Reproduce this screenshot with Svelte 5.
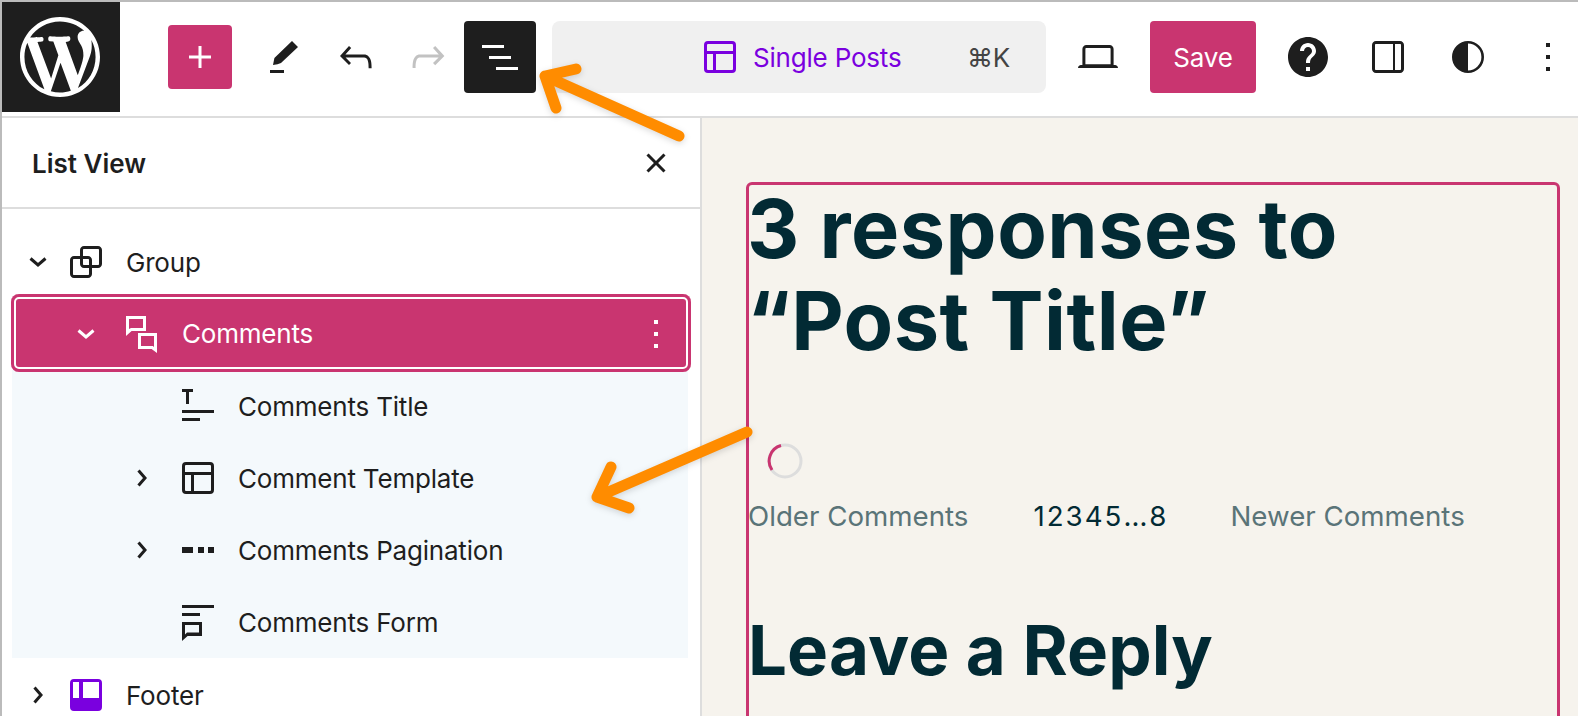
<script>
  const paths = {
    group: 'M18 4h-7c-1.1 0-2 .9-2 2v3H6c-1.1 0-2 .9-2 2v7c0 1.1.9 2 2 2h7c1.1 0 2-.9 2-2v-3h3c1.1 0 2-.9 2-2V6c0-1.1-.9-2-2-2zm-4.5 14c0 .3-.2.5-.5.5H6c-.3 0-.5-.2-.5-.5v-7c0-.3.2-.5.5-.5h3V13c0 1.1.9 2 2 2h2.5v3zm0-4.5H11c-.3 0-.5-.2-.5-.5v-2.5H13c.3 0 .5.2.5.5v2.5zm5-.5c0 .3-.2.5-.5.5h-3V11c0-1.1-.9-2-2-2h-2.5V6c0-.3.2-.5.5-.5h7c.3 0 .5.2.5.5v7z',
    comments: 'M4 3h10v7.5H6.8L4 13zM5.5 4.5v5l1-.5h6V4.5zM10 11.5h9.5v10L16.8 19.5H10zM11.5 13v5h5.9l.6.5V13z',
    title: 'M4 3.5h5.5V5H7.5v6H6V5H4zM4 14h16v1.5H4zM4 18h9v1.5H4z',
    layout: 'M18 5.5H6a.5.5 0 00-.5.5v3h13V6a.5.5 0 00-.5-.5zm.5 5H10v8h8a.5.5 0 00.5-.5v-7.5zm-10 0h-3V18a.5.5 0 00.5.5h2.5v-8zM6 4h12a2 2 0 012 2v12a2 2 0 01-2 2H6a2 2 0 01-2-2V6a2 2 0 012-2z',
    pagination: 'M4 10.5h5.5v3H4zM12 10.5h3v3h-3zM17 10.5h3v3h-3z',
    form: 'M4 3.5h16V5H4zM4 7.5h9V9H4zM4 12h10v7H6.8L4 21.5zM5.5 13.5v4.7l1-1h6v-3.7z',
    footer: 'M6 4h12a2 2 0 012 2v12a2 2 0 01-2 2H6a2 2 0 01-2-2V6a2 2 0 012-2zM5.5 5.5v8h3v-8zM10.5 5.5v8h8v-8z',
    dots: 'M13 19h-2v-2h2v2zm0-6h-2v-2h2v2zm0-6h-2V5h2v2z'
  };

  const rows = [
    { label: 'Comments Title', icon: 'title' },
    { label: 'Comment Template', icon: 'layout', arrow: true },
    { label: 'Comments Pagination', icon: 'pagination', arrow: true },
    { label: 'Comments Form', icon: 'form' }
  ];

  const pages = ['1', '2', '3', '4', '5', '…', '8'];
</script>

<div class="frame">
  <header class="topbar">
    <div class="logo">
      <svg viewBox="0 0 20 20" width="80" height="80"><path class="white" d="M20 10c0-5.51-4.49-10-10-10C4.48 0 0 4.49 0 10c0 5.52 4.48 10 10 10 5.51 0 10-4.48 10-10zM7.78 15.37L4.37 6.22c.55-.02 1.17-.08 1.17-.08.5-.06.44-1.13-.06-1.11 0 0-1.45.11-2.37.11-.18 0-.37 0-.58-.01C4.12 2.69 6.87 1.11 10 1.11c2.33 0 4.45.87 6.05 2.34-.68-.11-1.65.39-1.65 1.58 0 .74.45 1.36.9 2.1.35.61.55 1.36.55 2.46 0 1.49-1.4 5-1.4 5l-3.03-8.37c.54-.02.82-.17.82-.17.5-.05.44-1.25-.06-1.22 0 0-1.44.12-2.38.12-.87 0-2.33-.12-2.33-.12-.5-.03-.56 1.2-.06 1.22l.92.08 1.26 3.41zM17.41 10c.24-.64.74-1.87.43-4.25.7 1.29 1.05 2.71 1.05 4.25 0 3.29-1.73 6.24-4.4 7.78.97-2.59 1.94-5.2 2.92-7.78zM6.1 18.09C3.12 16.65 1.11 13.53 1.11 10c0-1.3.23-2.48.72-3.59C3.25 10.3 4.67 14.2 6.1 18.09zm4.03-6.63l2.58 6.98c-.86.29-1.76.45-2.71.45-.79 0-1.57-.11-2.29-.33.81-2.38 1.62-4.74 2.42-7.1z"/></svg>
    </div>

    <div class="plus">
      <svg class="ico" viewBox="0 0 24 24"><path class="white" d="M11.25 6.5h1.5v4.75h4.75v1.5h-4.75v4.75h-1.5v-4.75H6.5v-1.5h4.75z"/></svg>
    </div>
    <svg class="ico edit" viewBox="0 0 24 24"><path d="M15 4l3 3-8.5 8q-1.5.7-4 1l.7-3.5zM4 18.5h7V20H4z"/></svg>
    <svg class="ico undo" viewBox="0 0 24 24"><path d="M18.3 11.7c-.6-.6-1.4-.9-2.3-.9H6.7l2.9-3.3-1.1-1-4.5 5L8.5 16l1-1-2.7-2.7H16c.5 0 .9.2 1.3.5 1 1 1 3.4 1 4.5v.3h1.5v-.2c0-1.5 0-4.3-1.5-5.7z"/></svg>
    <svg class="ico redo" viewBox="0 0 24 24"><path class="muted" d="M15.6 6.5l-1.1 1 2.9 3.3H8c-.9 0-1.7.3-2.3.9-1.4 1.5-1.4 4.2-1.4 5.6v.2h1.5v-.3c0-1.1 0-3.5 1-4.5.3-.3.7-.5 1.3-.5h9.2L14.5 15l1.1 1.1 4.6-4.6-4.6-5z"/></svg>
    <div class="listbtn">
      <svg class="ico" viewBox="0 0 24 24"><path class="white" d="M3 6h11v1.5H3V6zm3.5 5.5h11V13h-11v-1.5zM21 17H10v1.5h11V17z"/></svg>
    </div>

    <div class="command">
      <svg class="ico" viewBox="0 0 24 24"><path class="purple" d={paths.layout}/></svg>
      <span class="doc-title">Single Posts</span>
      <span class="shortcut">⌘K</span>
    </div>

    <svg class="ico gap28" viewBox="0 0 24 24"><path d="M20.5 16h-.7V8c0-1.1-.9-2-2-2H6.2c-1.1 0-2 .9-2 2v8h-.7c-.8 0-1.5.7-1.5 1.5h20c0-.8-.7-1.5-1.5-1.5zM5.7 8c0-.3.2-.5.5-.5h11.6c.3 0 .5.2.5.5v7.6H5.7V8z"/></svg>
    <div class="save">Save</div>
    <svg class="ico gap28" viewBox="0 0 24 24"><path d="M12 2C6.47 2 2 6.47 2 12s4.47 10 10 10 10-4.47 10-10S17.53 2 12 2zm1 17h-2v-2h2v2zm2.07-7.75l-.9.92C13.45 12.9 13 13.5 13 15h-2v-.5c0-1.1.45-2.1 1.17-2.83l1.24-1.26c.37-.36.59-.86.59-1.41 0-1.1-.9-2-2-2s-2 .9-2 2H8c0-2.21 1.79-4 4-4s4 1.79 4 4c0 .88-.36 1.68-.93 2.25z"/></svg>
    <svg class="ico gap32" viewBox="0 0 24 24"><path d="M18 4H6c-1.1 0-2 .9-2 2v12c0 1.1.9 2 2 2h12c1.1 0 2-.9 2-2V6c0-1.1-.9-2-2-2zM5.5 18V6c0-.3.2-.5.5-.5h8.5v13H6c-.3 0-.5-.2-.5-.5zM18.5 18c0 .3-.2.5-.5.5h-2.5v-13H18c.3 0 .5.2.5.5v12z"/></svg>
    <svg class="ico gap32" viewBox="0 0 24 24"><path d="M12 4a8 8 0 100 16 8 8 0 000-16zm0 14.7V5.3a6.7 6.7 0 010 13.4z"/></svg>
    <svg class="ico gap32" viewBox="0 0 24 24"><path d={paths.dots}/></svg>
  </header>

  <div class="body">
    <aside class="sidebar">
      <div class="side-head">
        <h2>List View</h2>
        <svg class="ico" viewBox="0 0 24 24"><path d="M12 13.06l3.712 3.713 1.061-1.06L13.061 12l3.712-3.712-1.06-1.06L12 10.938 8.288 7.227l-1.061 1.06L10.939 12l-3.712 3.712 1.06 1.061L12 13.061z"/></svg>
      </div>

      <div class="tree">
        <div class="row root" style="padding-left: 20px">
          <svg class="chev" viewBox="0 0 32 32"><path d="M8.5 12.5L16 19l7.5-6.5"/></svg>
          <svg class="ico" viewBox="0 0 24 24"><path d={paths.group}/></svg>
          <span>Group</span>
        </div>

        <div class="row selected" style="padding-left: 59px">
          <svg class="chev" viewBox="0 0 32 32"><path d="M8.5 12.5L16 19l7.5-6.5"/></svg>
          <svg class="ico" viewBox="0 0 24 24"><path class="white" fill-rule="evenodd" d={paths.comments}/></svg>
          <span>Comments</span>
          <svg class="ico row-more" viewBox="0 0 24 24"><path class="white" d={paths.dots}/></svg>
        </div>

        <div class="nested">
          {#each rows as r}
            <div class="row" style="padding-left: 124px">
              {#if r.arrow}
                <svg class="chev" viewBox="0 0 32 32"><path d="M12.5 8.5L19 16l-6.5 7.5"/></svg>
              {:else}
                <span class="chev"></span>
              {/if}
              <svg class="ico" viewBox="0 0 24 24"><path fill-rule="evenodd" d={paths[r.icon]}/></svg>
              <span>{r.label}</span>
            </div>
          {/each}
        </div>

        <div class="row root footer-row" style="padding-left: 20px">
          <svg class="chev" viewBox="0 0 32 32"><path d="M12.5 8.5L19 16l-6.5 7.5"/></svg>
          <svg class="ico" viewBox="0 0 24 24"><path class="purple" fill-rule="evenodd" d={paths.footer}/></svg>
          <span>Footer</span>
        </div>
      </div>
    </aside>

    <main class="canvas">
      <section class="block">
        <h1>3 responses to<br />“Post Title”</h1>
        <svg class="spinner" viewBox="0 0 36 36" width="36" height="36">
          <circle cx="18" cy="18" r="16" fill="none" stroke="#ddd" stroke-width="3" />
          <path class="arc" d="M5 27A16 16 0 0 1 14 2.5" />
        </svg>
        <nav class="pager">
          <span class="older">Older Comments</span>
          <span class="nums">
            {#each pages as p}<span>{p}</span>{/each}
          </span>
          <span class="newer">Newer Comments</span>
        </nav>
        <h3>Leave a Reply</h3>
      </section>
    </main>
  </div>

  <svg class="arrows" viewBox="0 0 1578 716" width="1578" height="716">
    <path class="arrow" d="M679 136L545 76M576 69L545 76L556 108" />
    <path class="arrow" d="M747 432L597 497M611 467L597 497L629 508" />
  </svg>
</div>

<style>
  :global(body) {
    margin: 0;
    background: #fff;
  }

  .frame {
    position: relative;
    width: 1578px;
    height: 716px;
    overflow: hidden;
    box-sizing: border-box;
    border-top: 2px solid #bbb;
    border-left: 2px solid #bbb;
    font-family: Inter, "Liberation Sans", sans-serif;
    font-size: 26px;
    letter-spacing: -0.2px;
    color: #1e1e1e;
  }

  .topbar {
    display: flex;
    align-items: center;
    box-sizing: border-box;
    height: 116px;
    padding-bottom: 4px;
    border-bottom: 2px solid #ddd;
  }

  path {
    fill: #1e1e1e;
  }

  path.white { fill: #fff; }
  path.purple { fill: #7a00df; }
  path.muted { fill: #c2c2c2; }

  .ico {
    display: block;
    flex: none;
    width: 48px;
    height: 48px;
  }

  .logo {
    display: flex;
    align-items: center;
    justify-content: center;
    align-self: stretch;
    box-sizing: border-box;
    width: 118px;
    padding-right: 2px;
    background: #1e1e1e;
  }

  .plus {
    display: flex;
    align-items: center;
    justify-content: center;
    width: 64px;
    height: 64px;
    margin-left: 48px;
    border-radius: 4px;
    background: #c93570;
  }

  .edit { margin-left: 30px; }
  .undo { margin-left: 22px; }
  .redo { margin-left: 24px; }
  .gap28 { margin-left: 28px; }
  .gap32 { margin-left: 32px; }

  .listbtn {
    display: flex;
    align-items: center;
    justify-content: center;
    width: 72px;
    height: 72px;
    margin-left: 12px;
    border-radius: 4px;
    background: #1e1e1e;
  }

  .command {
    display: flex;
    align-items: center;
    box-sizing: border-box;
    width: 494px;
    height: 72px;
    margin-left: 16px;
    padding: 0 36px 0 144px;
    border-radius: 8px;
    background: #f0f0f0;
  }

  .doc-title {
    margin-left: 9px;
    color: #7a00df;
  }

  .shortcut {
    margin-left: auto;
    color: #444;
  }

  .save {
    display: flex;
    align-items: center;
    justify-content: center;
    width: 106px;
    height: 72px;
    margin-left: 28px;
    border-radius: 4px;
    background: #c93570;
    color: #fff;
  }

  .body {
    display: flex;
    height: 598px;
  }

  .sidebar {
    flex: none;
    box-sizing: content-box;
    width: 698px;
    border-right: 2px solid #ddd;
  }

  .side-head {
    display: flex;
    align-items: center;
    justify-content: space-between;
    height: 89px;
    padding: 0 20px 0 30px;
    border-bottom: 2px solid #ddd;
  }

  h2 {
    margin: 2px 0 0;
    font-size: 26px;
    font-weight: 600;
    letter-spacing: 0;
  }

  .tree {
    padding-top: 17px;
  }

  .row {
    display: flex;
    align-items: center;
    box-sizing: border-box;
    height: 72px;
  }

  .row span:not(.chev) {
    margin-left: 16px;
  }

  .chev {
    display: block;
    flex: none;
    width: 32px;
    height: 32px;
    margin-right: 16px;
  }

  .chev path {
    fill: none;
    stroke: #1e1e1e;
    stroke-width: 3;
  }

  .root .chev {
    margin-right: 8px;
  }

  .selected {
    position: relative;
    z-index: 1;
    height: 78px;
    margin: -4px 9px 0 9px;
    padding-top: 1px;
    border-radius: 8px;
    background: #c93570;
    color: #fff;
    box-shadow: inset 0 0 0 3px #c93570, inset 0 0 0 5px #fff;
  }

  .selected .chev path {
    stroke: #fff;
  }

  .selected .row-more {
    margin-left: auto;
    margin-right: 11px;
  }

  .nested {
    width: 676px;
    margin-left: 10px;
    background: #f4f9fc;
  }

  .nested .row {
    margin-left: -10px;
  }

  .nested .row:first-child {
    margin-top: -2px;
  }

  .footer-row {
    margin-top: 1px;
  }

  .canvas {
    flex: 1;
    box-sizing: border-box;
    padding: 64px 18px 0 44px;
    background: #f6f3ed;
    overflow: hidden;
  }

  .block {
    box-sizing: border-box;
    height: 600px;
    border: 3px solid #c93570;
    border-radius: 6px;
    color: #022a34;
  }

  h1 {
    margin: -2px 0 0 -2px;
    font-size: 81px;
    line-height: 92px;
    font-weight: 650;
    letter-spacing: 0.5px;
  }

  .spinner {
    display: block;
    margin: 76px 0 0 18px;
  }

  .arc {
    fill: none;
    stroke: #c93570;
    stroke-width: 3;
  }

  .pager {
    display: flex;
    margin: 17px 0 0 -1px;
    font-size: 27.7px;
    letter-spacing: 0;
    color: #5a7478;
    line-height: 40px;
  }

  .nums {
    display: flex;
    gap: 2px;
    margin-left: 65px;
    color: #022a34;
  }

  .newer {
    margin-left: 64px;
  }

  h3 {
    margin: 72px 0 0 -1px;
    font-size: 69px;
    line-height: 84px;
    font-weight: 650;
    letter-spacing: 0.1px;
  }

  .arrows {
    position: absolute;
    left: -2px;
    top: -2px;
    z-index: 2;
    filter: drop-shadow(0 2px 3px rgba(0, 0, 0, 0.15));
  }

  .arrow {
    fill: none;
    stroke: #ff8c00;
    stroke-width: 11;
    stroke-linecap: round;
    stroke-linejoin: round;
  }
</style>
